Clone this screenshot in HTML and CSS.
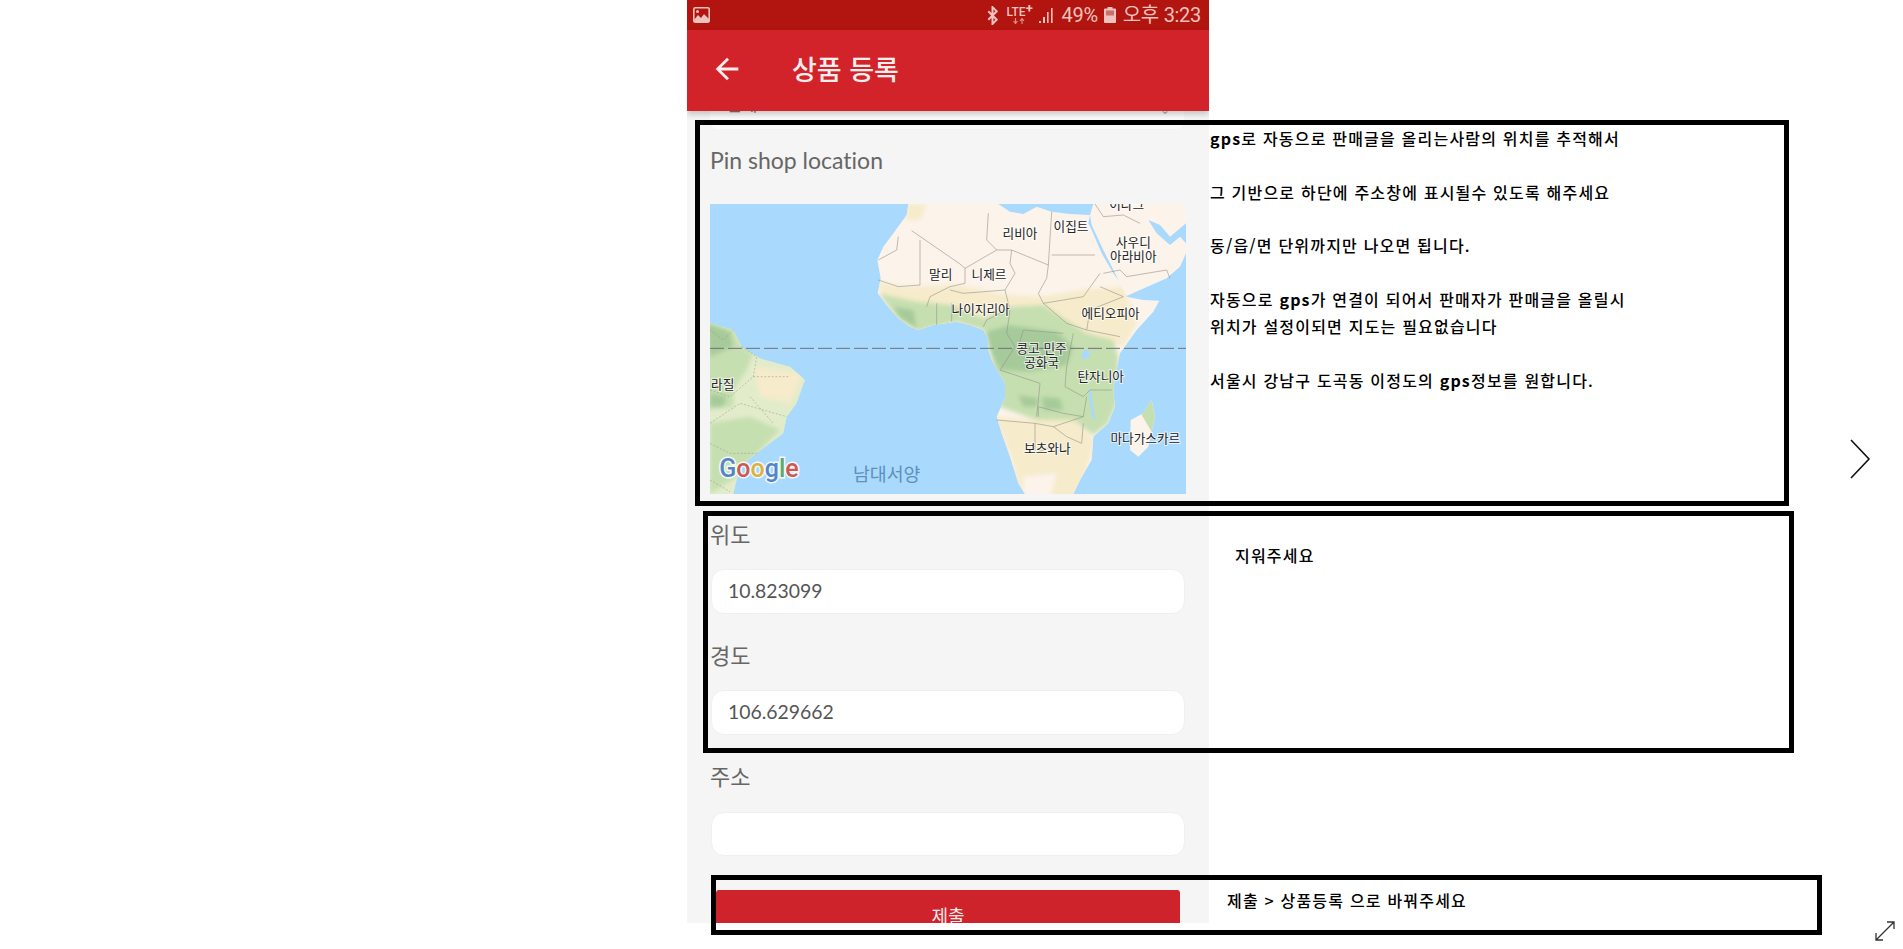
FILE: index.html
```html
<!DOCTYPE html>
<html lang="ko">
<head>
<meta charset="utf-8">
<title>상품 등록</title>
<link rel="stylesheet" href="styles.css">
</head>
<body>
<main class="page">
  <section class="phone">
    <div class="status">
      <svg class="status-pic" viewBox="0 0 17 16"><rect x="0.8" y="0.8" width="15.4" height="14.4" rx="1.5" fill="none" stroke="#eec3bd" stroke-width="1.6"/><path d="M1 13l4-5 3 3 3-4 5 5v3H1z" fill="#eec3bd"/><circle cx="4.5" cy="4.5" r="1.5" fill="#eec3bd"/></svg>
      <div class="status-right">
        <svg class="status-bt" viewBox="0 0 10 18"><path d="M1 5l8 8-4 4V1l4 4-8 8" fill="none" stroke="#eec3bd" stroke-width="1.9"/></svg>
        <span class="status-lte">LTE<sup>+</sup><svg class="status-updown" viewBox="0 0 14 6"><path d="M3.500 0v5M1.500 3l2 2.500 2-2.500M10 6V1M8 3l2-2.500 2 2.500" fill="none" stroke="#d98f88" stroke-width="1.200"/></svg></span>
        <svg class="status-bars" viewBox="0 0 17 16"><path d="M1 14h2v2H1zM5 10h2v6H5zM9 5h1.600v11H9zM13 1h1.600v15H13z" fill="#eec3bd"/></svg>
        <span class="status-text">49%</span>
        <svg class="status-batt" viewBox="0 0 12 16"><path d="M3.500 0h5v1.500H11a1 1 0 0 1 1 1V15a1 1 0 0 1-1 1H1a1 1 0 0 1-1-1V2.500a1 1 0 0 1 1-1h2.500z" fill="#eec3bd"/><rect x="2" y="3.500" width="8" height="5" fill="#c9706a"/></svg>
        <span class="status-text">오후 3:23</span>
      </div>
    </div>
    <header class="appbar">
      <svg class="back" viewBox="0 0 24 24"><path d="M20 11H7.830l5.590-5.590L12 4l-8 8 8 8 1.410-1.410L7.830 13H20v-2z" fill="#fdeeee"/></svg>
      <h1 class="title">상품 등록</h1>
    </header>
    <div class="content">
      <div class="peek"><span class="peek-text">전체</span><span class="peek-arrow">⌄</span></div>
      <h2 class="map-title">Pin shop location</h2>
      <svg class="map" viewBox="60 42 1428 870" role="img" aria-label="지도">
        <defs>
          <clipPath id="africa"><path d="M655 42L650 75 610 130 580 170 562 210 572 265 563 310 590 345 625 385 660 410 685 420 730 405 800 395 840 405 880 420 893 445 895 480 905 510 925 545 945 580 945 625 920 680 935 730 960 800 985 880 1005 912H1150L1170 870 1205 810 1210 740 1255 700 1275 650 1270 600 1280 540 1290 490 1340 420 1390 365 1408 332 1360 330 1310 320 1300 290 1270 250 1235 190 1205 120 1195 100 1200 75 1140 72 1085 65 1040 50 1000 72 960 65 925 42z"/></clipPath>
          <clipPath id="brazil"><path d="M60 400L130 420 155 470 210 505 300 530 345 570 320 640 290 680 280 730 200 790 150 830 130 912H60z"/></clipPath>
          <filter id="soft" x="-5%" y="-5%" width="110%" height="110%"><feGaussianBlur stdDeviation="7"/></filter>
        </defs>
        <rect x="60" y="42" width="1428" height="870" fill="#a9d9fd"/>
        <path class="land" d="M655 42L650 75 610 130 580 170 562 210 572 265 563 310 590 345 625 385 660 410 685 420 730 405 800 395 840 405 880 420 893 445 895 480 905 510 925 545 945 580 945 625 920 680 935 730 960 800 985 880 1005 912H1150L1170 870 1205 810 1210 740 1255 700 1275 650 1270 600 1280 540 1290 490 1340 420 1390 365 1408 332 1360 330 1310 320 1300 290 1270 250 1235 190 1205 120 1195 100 1200 75 1140 72 1085 65 1040 50 1000 72 960 65 925 42z"/>
        <g clip-path="url(#africa)"><g filter="url(#soft)">
          <path class="sand" d="M650 42H710L690 90 650 90zM560 275L640 290 800 285 950 315 1050 320 1180 300 1300 290 1340 400 1300 470 1200 440 1060 360 880 420 730 415 680 430 600 370z"/>
          <path class="green" d="M565 310L680 335 790 345 880 385 960 350 1060 345 1190 430 1270 450 1285 500 1280 640 1255 700 1210 735 1150 690 1040 690 930 650 900 480 880 420 800 395 730 410 685 425 625 385z"/>
          <path class="deep" d="M890 425L960 405 1100 425 1150 470 1130 525 1020 545 930 540 900 480zM985 615L1045 625 1040 650 1000 650zM610 350L670 360 680 415 630 385zM1055 620L1110 625 1120 660 1060 660z"/>
          <path class="sand" d="M915 680L1040 690 1150 690 1215 750 1180 870 1150 925H990L970 820 935 730z"/>
          <path class="land" d="M1000 860L1100 850 1080 925H1000z"/>
          <path class="land" d="M1050 230L1180 220 1190 260 1060 270z"/>
        </g></g>
        <path class="land" d="M1210 42L1200 75 1205 105 1240 180 1275 250 1310 318 1350 300 1430 265 1470 230 1488 190V42z"/>
        <path class="water" d="M1375 90L1400 130 1440 165 1470 140 1488 160V100L1440 140 1410 105z"/>
        <path class="pale" d="M60 400L130 420 155 470 210 505 300 530 345 570 320 640 290 680 280 730 200 790 150 830 130 912H60z"/>
        <g clip-path="url(#brazil)"><g filter="url(#soft)">
          <path class="green" d="M50 390L130 420 155 470 190 490 170 540 130 600 130 650 50 660z"/>
          <path class="deep" d="M50 400L120 425 130 470 60 500z"/>
          <path class="deep" d="M60 610L110 620 100 650 60 650z"/>
          <path class="sand" d="M190 530L340 550 300 640 210 620z"/>
          <path class="green" d="M60 700L180 680 270 720 190 800 140 860 60 912z"/>
        </g></g>
        <path class="land" d="M1385 630L1395 680 1375 770 1345 800 1320 780 1322 690 1360 670z"/>
        <path class="green" d="M1385 630L1395 680 1385 725 1355 675z"/>
        <path class="water" d="M1175 490L1195 475 1200 500 1178 510zM1195 595L1205 610 1210 660 1218 690 1205 680 1198 630z"/>
        <path class="border" d="M665 122L810 222 825 235 920 180 965 180 1075 225 1085 65M895 70L890 150 920 180M1085 195H1215M690 150V270 285L625 290 565 270M625 140L620 180 565 210M825 235V280L780 290 720 320 710 350M965 180L960 220 975 250 945 300 820 310 780 300M1075 225L1070 265 1045 310 1060 340 1180 320 1230 250M1230 290L1300 320 1200 360 1190 420 1290 440M945 300L960 360 950 430 975 470 930 540 1020 570 1050 580 1040 680M1150 430L1130 530 1125 590 1180 620 1200 600 1265 600M1045 680L1045 650 1120 670 1180 680 1190 620M920 690L1035 700 1090 710 1180 680M1035 700V790L1085 770M1090 710L1130 740 1175 760 1180 700M785 340V395M740 340V405M880 410L890 390 960 355M1060 340L1130 400 1190 420M1120 430L1000 420 985 470M1310 260L1430 240 1440 265M1310 260L1290 240 1240 250M1215 42L1240 80 1300 75 1350 100"/>
        <path class="state" d="M130 420L100 450 60 420M155 470L200 500 190 560 120 620 60 600M60 700L150 640 290 680M60 760L120 790 200 790M60 870L120 905M190 560L300 560M180 620L250 700"/>
        <path class="equator" d="M60 475H1488"/>
        <g class="labels">
          <text x="990" y="144">리비아</text>
          <text x="1143" y="124">이집트</text>
          <text><tspan x="1330" y="170">사우디</tspan><tspan x="1330" y="212">아라비아</tspan></text>
          <text x="1310" y="58">이라크</text>
          <text x="752" y="268">말리</text>
          <text x="897" y="268">니제르</text>
          <text x="872" y="372">나이지리아</text>
          <text x="1262" y="384">에티오피아</text>
          <text><tspan x="1055" y="490">콩고 민주</tspan><tspan x="1055" y="532">공화국</tspan></text>
          <text x="1232" y="572">탄자니아</text>
          <text x="1366" y="760">마다가스카르</text>
          <text x="1072" y="788">보츠와나</text>
          <text x="98" y="598">라질</text>
        </g>
        <text class="ocean" x="590" y="872">남대서양</text>
        <text class="logo" x="88" y="860"><tspan class="g-blue">G</tspan><tspan class="g-red">o</tspan><tspan class="g-yellow">o</tspan><tspan class="g-blue">g</tspan><tspan class="g-green">l</tspan><tspan class="g-red">e</tspan></text>
      </svg>
      <label class="field-label label-first">위도</label>
      <input class="field" value="10.823099" readonly>
      <label class="field-label">경도</label>
      <input class="field" value="106.629662" readonly>
      <label class="field-label">주소</label>
      <input class="field field-short" value="" readonly>
      <button class="submit" type="button">제출</button>
    </div>
  </section>

  <aside class="note note-map">
    <p class="note-para"><b>gps</b>로 자동으로 판매글을 올리는사람의 위치를 추적해서</p>
    <p class="note-para">그 기반으로 하단에 주소창에 표시될수 있도록 해주세요</p>
    <p class="note-para">동/읍/면 단위까지만 나오면 됩니다.</p>
    <p class="note-para">자동으로 <b>gps</b>가 연결이 되어서 판매자가 판매글을 올릴시<br>위치가 설정이되면 지도는 필요없습니다</p>
    <p class="note-para">서울시 강남구 도곡동 이정도의 <b>gps</b>정보를 원합니다.</p>
  </aside>
  <aside class="note note-coords"><p class="note-para">지워주세요</p></aside>
  <aside class="note note-submit"><p class="note-para">제출 &gt; 상품등록 으로 바꿔주세요</p></aside>

  <svg class="next" viewBox="0 0 22 40"><path d="M2 1l18 19L2 39" fill="none" stroke="#111" stroke-width="1.6"/></svg>
  <svg class="expand" viewBox="0 0 20 20"><path d="M1 19L19 1M12 1h7v7M1 12v7h7" fill="none" stroke="#333" stroke-width="1.300"/></svg>
</main>
</body>
</html>
```

FILE: styles.css
```css
* { box-sizing: border-box; }
html, body { margin: 0; padding: 0; background: #fff; }
body { overflow: hidden; font-family: "Noto Sans CJK KR", "Noto Sans", sans-serif; }
.page { position: relative; width: 1903px; height: 949px; padding-left: 687px; }

.phone { position: relative; width: 522px; height: 923px; background: #f5f5f5; overflow: hidden; }
.status { height: 30px; background: #b2150f; display: flex; align-items: center; justify-content: space-between; padding: 0 8px 0 6px; color: #eec3bd; }
.status-pic { width: 17px; height: 16px; }
.status-right { display: flex; align-items: center; }
.status-bt { width: 11px; height: 19px; margin-right: 9px; }
.status-lte { position: relative; font: 500 12px/14px Roboto, sans-serif; width: 27px; margin-right: 4px; margin-top: -7px; }
.status-lte sup { font-size: 13px; line-height: 0; font-weight: 700; vertical-align: 3px; }
.status-updown { position: absolute; left: 5px; top: 13px; width: 14px; height: 6px; }
.status-bars { width: 17px; height: 16px; margin-right: 7px; }
.status-batt { width: 12px; height: 16px; margin: 0 7px 0 6px; }
.status-text { font: 400 20px/30px Roboto, "Noto Sans CJK KR", sans-serif; letter-spacing: -0.3px; }

.appbar { position: relative; z-index: 2; height: 81px; background: #d2232a; display: flex; align-items: center; padding: 0 0 4px 23px; box-shadow: 0 3px 6px rgba(0,0,0,.22); }
.back { width: 34px; height: 34px; margin-right: 48px; }
.title { margin: 0; font: 500 27px/34px "Noto Sans CJK KR", sans-serif; color: #fdeeee; }

.content { padding-left: 23px; }
.peek { width: 474px; height: 18px; background: #fbfbfb; border-radius: 0 0 8px 8px; overflow: hidden; display: flex; justify-content: space-between; padding: 0 14px 0 16px; color: #777; font-size: 17px; line-height: 24px; }
.peek-text { margin-top: -19px; }
.peek-arrow { margin-top: -14px; font-size: 12px; color: #aaa; }
.map-title { margin: 16px 0 29px; font: 400 23px/30px Lato, "Open Sans", sans-serif; color: #666; font-variant-ligatures: none; }
.map { display: block; width: 476px; height: 290px; }
.land { fill: #fcf3ea; }
.water { fill: #a9d9fd; }
.green { fill: #c6dfb0; }
.deep { fill: #a6ca99; }
.sand { fill: #f6ebcb; }
.pale { fill: #e2ecca; }
.border { fill: none; stroke: #94938a; stroke-width: 1.800; }
.state { fill: none; stroke: #94938a; stroke-width: 1.500; stroke-dasharray: 6 5; }
.equator { fill: none; stroke: #6f7078; stroke-width: 3; stroke-dasharray: 42 12; }
.labels text { font: 400 38px "Noto Sans CJK KR", sans-serif; fill: #222; text-anchor: middle; paint-order: stroke; stroke: rgba(255,255,255,.7); stroke-width: 6px; }
.ocean { font: 400 55px "Noto Sans CJK KR", sans-serif; fill: #5f8fbb; text-anchor: middle; }
.logo { font: 500 75px Roboto, sans-serif; paint-order: stroke; stroke: rgba(255,255,255,.85); stroke-width: 9px; }
.g-blue { fill: #5585c9; }
.g-red { fill: #cf5850; }
.g-yellow { fill: #dcb23e; }
.g-green { fill: #5ea868; }

.field-label { display: block; margin-top: 25px; font: 400 22px/30px "Noto Sans CJK KR", sans-serif; color: #666; }
.label-first { margin-top: 24px; }
.field { display: block; width: 474px; height: 45px; margin: 21px 0 0 1px; padding: 0 16px 2px; border: 1px solid #f0f0f0; border-radius: 13px; background: #fff; color: #555; font: 400 19.400px/41px Lato, "Open Sans", sans-serif; outline: none; }
.field-short { height: 44px; margin-top: 22px; }
.submit { display: block; width: 464px; height: 50px; margin: 34px 0 0 6px; padding: 0; border: 0; border-radius: 3px; background: #cf232b; color: #fbe9e9; font: 400 18px/24px "Noto Sans CJK KR", sans-serif; text-align: center; }

.note { position: absolute; border: 5px solid #000; color: #000; }
.note-para { margin: 0 0 26.850px; font: 500 16px/26.850px "Noto Sans CJK KR", sans-serif; letter-spacing: 1.200px; }
.note-map { left: 695px; top: 120px; width: 1094px; height: 386px; padding: 0 0 0 510px; }
.note-coords { left: 703px; top: 511px; width: 1091px; height: 242px; padding: 26px 0 0 527px; }
.note-submit { left: 711px; top: 875px; width: 1111px; height: 60px; padding: 7px 0 0 511px; }
.note-submit .note-para { margin: 0; }

.next { position: absolute; left: 1849px; top: 439px; width: 22px; height: 40px; }
.expand { position: absolute; left: 1875px; top: 921px; width: 20px; height: 20px; }
```
